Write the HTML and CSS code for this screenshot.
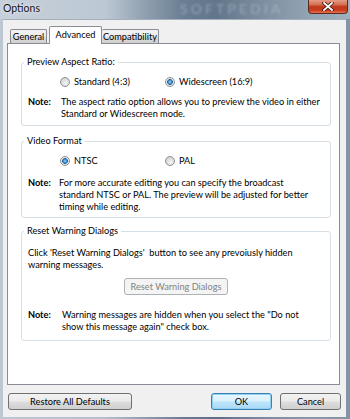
FILE: index.html
```html
<!DOCTYPE html>
<html lang="en">
<head>
  <meta charset="UTF-8">
  <title>Options</title>
  <link rel="stylesheet" href="styles.css">
</head>
<body>
  <div class="window">
    <div class="titlebar">
      <span class="title">Options</span>
      <span class="watermark">SOFTPEDIA</span>
      <button class="close" aria-label="Close">
        <svg width="12" height="9" viewBox="0 0 12 9">
          <path d="M2 1 L10 8 M10 1 L2 8" stroke="#3a1810" stroke-width="3.4" stroke-linecap="square"/>
          <path d="M2 1 L10 8 M10 1 L2 8" stroke="#fff" stroke-width="1.8" stroke-linecap="square"/>
        </svg>
      </button>
    </div>

    <div class="client">
      <div class="tabs">
        <div class="tab general">General</div>
        <div class="tab selected">Advanced</div>
        <div class="tab compat">Compatibility</div>
      </div>

      <div class="panel">
        <fieldset class="group group-aspect">
          <legend>Preview Aspect Ratio:</legend>
          <div class="radios">
            <label class="option"><span class="radio"></span>Standard (4:3)</label>
            <label class="option"><span class="radio checked"></span>Widescreen (16:9)</label>
          </div>
          <div class="note">
            <b>Note:</b>
            <span>The aspect ratio option allows you to preview the video in either<br>Standard or Widescreen mode.</span>
          </div>
        </fieldset>

        <fieldset class="group group-video">
          <legend>Video Format</legend>
          <div class="radios">
            <label class="option"><span class="radio checked"></span>NTSC</label>
            <label class="option"><span class="radio"></span>PAL</label>
          </div>
          <div class="note note-video">
            <b>Note:</b>
            <span>For more accurate editing you can specify the broadcast<br>standard NTSC or PAL. The preview will be adjusted for better<br>timing while editing.</span>
          </div>
        </fieldset>

        <fieldset class="group group-reset">
          <legend>Reset Warning Dialogs</legend>
          <p class="info">Click 'Reset Warning Dialogs'&nbsp; button to see any prevoiusly hidden<br>warning messages.</p>
          <div class="reset-row">
            <button class="btn" disabled>Reset Warning Dialogs</button>
          </div>
          <div class="note note-reset">
            <b>Note:</b>
            <span>Warning messages are hidden when you select the "Do not<br>show this message again" check box.</span>
          </div>
        </fieldset>
      </div>

      <div class="actions">
        <button class="btn restore">Restore All Defaults</button>
        <div class="right">
          <button class="btn default">OK</button>
          <button class="btn">Cancel</button>
        </div>
      </div>
    </div>
  </div>
</body>
</html>
```

FILE: styles.css
```css
body {
  margin: 0;
  width: 350px;
  height: 419px;
  overflow: hidden;
  font-family: Lato, "Noto Sans", sans-serif;
  font-size: 9.2px;
  color: #000;
}
.window {
  height: 419px;
  display: flex;
  flex-direction: column;
  background: linear-gradient(90deg, #bcc7d2 0%, #b4c0cc 30%, #8b9bac 42%, #6a7e93 52%, #5d7186 62%, #7a8c9e 75%, #8899aa 88%, #8394a5 100%);
}
.titlebar {
  position: relative;
  height: 19px;
  flex: none;
  background: linear-gradient(90deg, #c6d0da 0%, #bcc8d4 30%, #8e9eaf 42%, #6b7f94 52%, #62768b 62%, #7e90a2 76%, #92a3b3 88%, #9fb0bf 100%);
}
.title {
  position: absolute;
  left: 3px;
  top: 2px;
  font-size: 10.5px;
  line-height: 12px;
  color: #111;
  text-shadow: 0 0 4px #e8eef4, 0 0 2px #e8eef4;
}
.watermark {
  position: absolute;
  left: 180px;
  top: 1px;
  font-size: 14px;
  line-height: 16px;
  font-weight: bold;
  letter-spacing: 3px;
  color: rgba(205, 215, 226, 0.3);
  filter: blur(0.8px);
}
.close {
  position: absolute;
  right: 2px;
  top: -1px;
  width: 40px;
  height: 15px;
  padding: 0;
  border: 1px solid #5b2a20;
  border-top: 0;
  border-radius: 0 0 4px 4px;
  background: linear-gradient(180deg, #e9a593 0%, #d4704f 40%, #c2381d 55%, #c83c20 80%, #e7714f 100%);
  display: flex;
  align-items: center;
  justify-content: center;
}
.client {
  flex: 1;
  margin: 0 4px 2px 3px;
  background: #f0f0f0;
  border-top: 1px solid #a3afbb;
  display: flex;
  flex-direction: column;
}
.tabs {
  display: flex;
  align-items: flex-end;
  height: 23px;
  padding-left: 7px;
}
.tab {
  position: relative;
  box-sizing: border-box;
  height: 14px;
  line-height: 13px;
  text-align: center;
  border: 1px solid #898c95;
  border-bottom: 0;
  border-radius: 2px 2px 0 0;
  background: linear-gradient(180deg, #f2f2f2 0%, #ebebeb 50%, #dddddd 51%, #cfcfcf 100%);
  white-space: nowrap;
}
.general {
  width: 37px;
}
.tab.selected {
  width: 53px;
  height: 18px;
  margin: 0 0 -1px 2px;
  line-height: 15px;
  background: #fff;
  z-index: 1;
}
.compat {
  width: 57px;
  border-left: 0;
}
.panel {
  position: relative;
  height: 328px;
  margin: 0 6px 0 4px;
  padding: 12px 8px 0 13px;
  border: 1px solid #898c95;
  background: #fff;
}
.group {
  position: relative;
  box-sizing: border-box;
  margin: 0;
  padding: 0 6px;
  border: 1px solid #d5dfe5;
  border-radius: 3px;
  line-height: 12px;
}
.group legend {
  margin-left: -4px;
  padding: 0 3px;
  line-height: 12px;
}
.group-aspect {
  height: 70px;
}
.group-video {
  margin-top: 9px;
  height: 83px;
}
.group-reset {
  margin-top: 7px;
  height: 116px;
}
.radios {
  display: flex;
  margin-top: 8px;
  padding-left: 32px;
  white-space: nowrap;
}
.option {
  width: 105px;
  display: flex;
  align-items: center;
  gap: 4px;
}
.radio {
  box-sizing: border-box;
  width: 10px;
  height: 10px;
  border-radius: 50%;
  border: 1px solid #8e8f8f;
  background: radial-gradient(circle at 60% 65%, #f4f4f4 0%, #dcdcdc 55%, #c8c8c8 100%);
}
.radio.checked {
  background: radial-gradient(circle, #9fd4f6 0%, #3d8fd0 30%, #1f5f97 48%, #e4e9ed 54%, #f6f6f6 100%);
}
.note {
  display: grid;
  grid-template-columns: 33px 1fr;
  margin-top: 8px;
  white-space: nowrap;
}
.note-video {
  margin-top: 10px;
  grid-template-columns: 31px 1fr;
}
.note-reset {
  margin-top: 14px;
  grid-template-columns: 34px 1fr;
}
.info {
  margin: 10px 0 0;
  white-space: nowrap;
}
.reset-row {
  display: flex;
  justify-content: center;
  margin-top: 7px;
}
.btn {
  box-sizing: border-box;
  height: 17px;
  padding: 0;
  border: 1px solid #707070;
  border-radius: 3px;
  background: linear-gradient(180deg, #f2f2f2 0%, #ebebeb 48%, #dddddd 52%, #cfcfcf 100%);
  font-family: inherit;
  font-size: 9.2px;
  color: #000;
  line-height: 14px;
  white-space: nowrap;
}
.btn:disabled {
  width: 104px;
  border-color: #adb2b5;
  background: #f4f4f4;
  color: #838383;
}
.actions {
  display: flex;
  justify-content: space-between;
  margin: 8px 5px 0 5px;
}
.restore {
  width: 124px;
}
.right {
  display: flex;
  gap: 8px;
}
.right .btn {
  width: 61px;
}
.btn.default {
  border-color: #3c7fb1;
  background: linear-gradient(180deg, #eaf6fd 0%, #d9f0fc 48%, #bee6fd 52%, #a7d9f5 100%);
  box-shadow: inset 0 0 0 1px #8fd0f3;
}
```
